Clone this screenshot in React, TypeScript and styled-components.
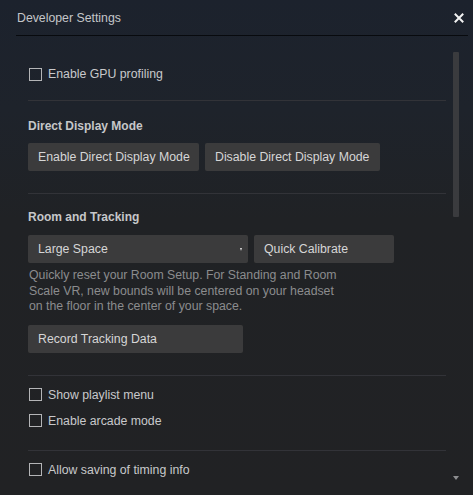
import React from "react";
import styled, { createGlobalStyle } from "styled-components";

const Global = createGlobalStyle`
  html, body { margin: 0; padding: 0; background: #212224; }
  body { font-family: "Liberation Sans", Arial, sans-serif; }
  * { box-sizing: border-box; }
`;

const Panel = styled.div`
  width: 473px;
  height: 495px;
  display: flex;
  flex-direction: column;
  background: linear-gradient(to bottom, #1c222d 0px, #1e232b 110px, #202225 220px, #212224 100%);
  overflow: hidden;
`;

const Header = styled.div`
  height: 36px;
  margin: 0 5px 0 16px;
  display: flex;
  align-items: center;
  justify-content: space-between;
  border-bottom: 1px solid #080a0e;
`;

const Title = styled.div`
  font-size: 12.3px;
  color: #c4c6c9;
  padding-left: 1px;
  padding-top: 1px;
`;

const Close = styled.div`
  width: 16px;
  height: 16px;
  display: flex;
  align-items: center;
  justify-content: center;
  margin-right: 1px;
`;

const Body = styled.div`
  flex: 1;
  display: flex;
`;

const Content = styled.div`
  flex: 1;
  padding: 28px 7px 0 28px;
  display: flex;
  flex-direction: column;
`;

const ScrollCol = styled.div`
  width: 20px;
  display: flex;
  flex-direction: column;
  align-items: flex-start;
  justify-content: space-between;
  padding: 16px 0 15px 0;
`;

const Thumb = styled.div`
  width: 6px;
  height: 165px;
  background: #3a3b3e;
  border-radius: 1px;
`;

const DownArrow = styled.div`
  width: 0;
  height: 0;
  border-left: 3px solid transparent;
  border-right: 3px solid transparent;
  border-top: 4px solid #8d8e90;
`;

const CheckRow = styled.label<{ $mt?: number }>`
  display: flex;
  align-items: center;
  height: 20px;
  margin-top: ${(p) => p.$mt ?? 0}px;
  font-size: 12.3px;
  color: #c8c9cb;
`;

const Box = styled.span`
  width: 13px;
  height: 13px;
  border: 1px solid #b4b5b7;
  margin-left: 1px;
  margin-right: 6px;
  flex: none;
`;

const Sep = styled.div<{ $mt: number }>`
  margin-top: ${(p) => p.$mt}px;
  height: 1px;
  background: #323338;
`;

const Heading = styled.div<{ $mt: number }>`
  margin-top: ${(p) => p.$mt}px;
  font-size: 12px;
  font-weight: bold;
  line-height: 16px;
  color: #c6c7c9;
`;

const ButtonRow = styled.div<{ $mt: number }>`
  display: flex;
  gap: 6px;
  margin-top: ${(p) => p.$mt}px;
`;

const Button = styled.div<{ $w?: number }>`
  height: 28px;
  ${(p) => (p.$w ? `width: ${p.$w}px;` : "")}
  padding: 0 10px;
  display: flex;
  align-items: center;
  background: #3b3b3c;
  border-radius: 2px;
  font-size: 12.3px;
  color: #d6d6d6;
  white-space: nowrap;
`;

const Select = styled(Button)`
  justify-content: space-between;
  padding-right: 6px;
`;

const Caret = styled.span`
  width: 0;
  height: 0;
  border-left: 1.5px solid transparent;
  border-right: 1.5px solid transparent;
  border-top: 3px solid #e0e0e0;
  margin-top: 1px;
`;

const Desc = styled.div`
  margin-top: 5px;
  font-size: 12.3px;
  line-height: 15.5px;
  color: #8b8c8e;
  width: 312px;
  padding-left: 1px;
`;

export default function App() {
  return (
    <>
      <Global />
      <Panel>
        <Header>
          <Title>Developer Settings</Title>
          <Close>
            <svg width="10" height="10" viewBox="0 0 10 10">
              <path d="M1.5 1.5 L8.5 8.5 M8.5 1.5 L1.5 8.5" stroke="#f2f2f2" strokeWidth="2" strokeLinecap="square" />
            </svg>
          </Close>
        </Header>
        <Body>
          <Content>
            <CheckRow>
              <Box />
              Enable GPU profiling
            </CheckRow>
            <Sep $mt={16} />
            <Heading $mt={17}>Direct Display Mode</Heading>
            <ButtonRow $mt={9}>
              <Button $w={171}>Enable Direct Display Mode</Button>
              <Button $w={175}>Disable Direct Display Mode</Button>
            </ButtonRow>
            <Sep $mt={22} />
            <Heading $mt={15}>Room and Tracking</Heading>
            <ButtonRow $mt={10}>
              <Select $w={220}>
                Large Space
                <Caret />
              </Select>
              <Button $w={140}>Quick Calibrate</Button>
            </ButtonRow>
            <Desc>
              Quickly reset your Room Setup. For Standing and Room Scale VR, new bounds will be centered on your headset on the floor in the center of your space.
            </Desc>
            <ButtonRow $mt={10}>
              <Button $w={215}>Record Tracking Data</Button>
            </ButtonRow>
            <Sep $mt={22} />
            <CheckRow $mt={9}>
              <Box />
              Show playlist menu
            </CheckRow>
            <CheckRow $mt={6}>
              <Box />
              Enable arcade mode
            </CheckRow>
            <Sep $mt={19} />
            <CheckRow $mt={9}>
              <Box />
              Allow saving of timing info
            </CheckRow>
          </Content>
          <ScrollCol>
            <Thumb />
            <DownArrow />
          </ScrollCol>
        </Body>
      </Panel>
    </>
  );
}
